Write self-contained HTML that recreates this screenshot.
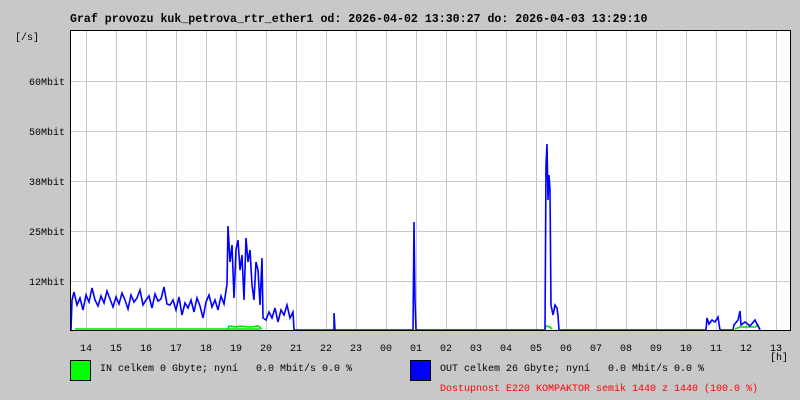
<!DOCTYPE html>
<html><head><meta charset="utf-8"><style>
body{margin:0;background:#c8c8c8;width:800px;height:400px;overflow:hidden;font-family:"Liberation Mono",monospace;}
svg{position:absolute;left:0;top:0}
text{white-space:pre}
</style></head><body>
<svg width="800" height="400" xmlns="http://www.w3.org/2000/svg" font-family="Liberation Mono, monospace" xml:space="preserve">
<rect x="0" y="0" width="800" height="400" fill="#c8c8c8"/>
<text x="70" y="22" font-size="11.6" font-weight="bold" fill="#000">Graf provozu kuk_petrova_rtr_ether1 od: 2026-04-02 13:30:27 do: 2026-04-03 13:29:10</text>
<rect x="70.5" y="30.5" width="720" height="300" fill="#fff" stroke="none"/>
<g stroke="#c8c8c8" stroke-width="1">
<path d="M86.5 31V330M116.5 31V330M146.5 31V330M176.5 31V330M206.5 31V330M236.5 31V330M266.5 31V330M296.5 31V330M326.5 31V330M356.5 31V330M386.5 31V330M416.5 31V330M446.5 31V330M476.5 31V330M506.5 31V330M536.5 31V330M566.5 31V330M596.5 31V330M626.5 31V330M656.5 31V330M686.5 31V330M716.5 31V330M746.5 31V330M776.5 31V330"/>
<path d="M66 81.5H790M66 131.5H790M66 181.5H790M66 231.5H790M66 281.5H790"/>
</g>
<g fill="none" stroke-width="1.6">
<polyline stroke="#00e000" points="75,329 260,329"/>
<polyline stroke="#00e000" points="228,329 229,326 236,327 240,326 250,327 258,326 262,329"/>
<polyline stroke="#00e000" points="545,329 546,326 550,327 552,329"/>
<polyline stroke="#00e000" points="735,329 740,327 755,327 758,325 760,329"/>
<polyline stroke="#0000ff" points="71,330 72,300 74,292 77,305 80,298 83,310 86,295 89,302 92,288 95,300 98,306 101,296 104,303 107,291 110,299 113,307 116,297 119,304 122,293 125,300 128,309 131,295 134,302 137,298 140,290 143,305 146,300 149,296 152,308 155,294 158,301 161,299 164,287 167,304 170,305 173,300 176,310 179,297 182,315 185,303 188,308 191,300 194,312 197,298 200,306 203,318 206,302 209,295 212,307 215,300 218,310 221,296 224,304 227,284 228,226 230,262 232,245 234,298 236,250 238,240 240,270 242,255 244,300 246,238 248,262 250,250 252,285 254,300 256,262 258,270 260,305 262,258 263,318 266,320 269,312 272,318 275,308 278,322 281,310 284,315 287,305 290,318 293,312 294,330 334,330 334,313 335,330 413,330 414,222 415,300 416,330 545,330 546,165 547,144 548,200 549,175 550,190 551,305 553,315 555,305 557,308 558,316 559,330 706,330 707,318 709,324 712,320 715,322 718,317 720,330 733,330 734,325 738,320 740,311 741,325 745,322 750,326 755,320 757,324 760,330"/>
</g>
<rect x="70.5" y="30.5" width="720" height="300" fill="none" stroke="#000" stroke-width="1"/>
<g font-size="10" fill="#000">
<text x="15" y="40">[/s]</text>
<g text-anchor="end">
<text x="65" y="85">60Mbit</text><text x="65" y="135">50Mbit</text><text x="65" y="185">38Mbit</text><text x="65" y="235">25Mbit</text><text x="65" y="285">12Mbit</text>
</g>
<g text-anchor="middle">
<text x="86" y="351">14</text><text x="116" y="351">15</text><text x="146" y="351">16</text><text x="176" y="351">17</text><text x="206" y="351">18</text><text x="236" y="351">19</text><text x="266" y="351">20</text><text x="296" y="351">21</text><text x="326" y="351">22</text><text x="356" y="351">23</text><text x="386" y="351">00</text><text x="416" y="351">01</text><text x="446" y="351">02</text><text x="476" y="351">03</text><text x="506" y="351">04</text><text x="536" y="351">05</text><text x="566" y="351">06</text><text x="596" y="351">07</text><text x="626" y="351">08</text><text x="656" y="351">09</text><text x="686" y="351">10</text><text x="716" y="351">11</text><text x="746" y="351">12</text><text x="776" y="351">13</text>
</g>
<text x="770" y="360">[h]</text>
<rect x="70.5" y="360.5" width="20" height="20" fill="#00ff00" stroke="#000"/>
<text x="100" y="371">IN celkem 0 Gbyte; nyní   0.0 Mbit/s 0.0 %</text>
<rect x="410.5" y="360.5" width="20" height="20" fill="#0000ff" stroke="#000"/>
<text x="440" y="371">OUT celkem 26 Gbyte; nyní   0.0 Mbit/s 0.0 %</text>
<text x="440" y="391" fill="#ff0000">Dostupnost E220 KOMPAKTOR semik 1440 z 1440 (100.0 %)</text>
</g>
</svg>
</body></html>
